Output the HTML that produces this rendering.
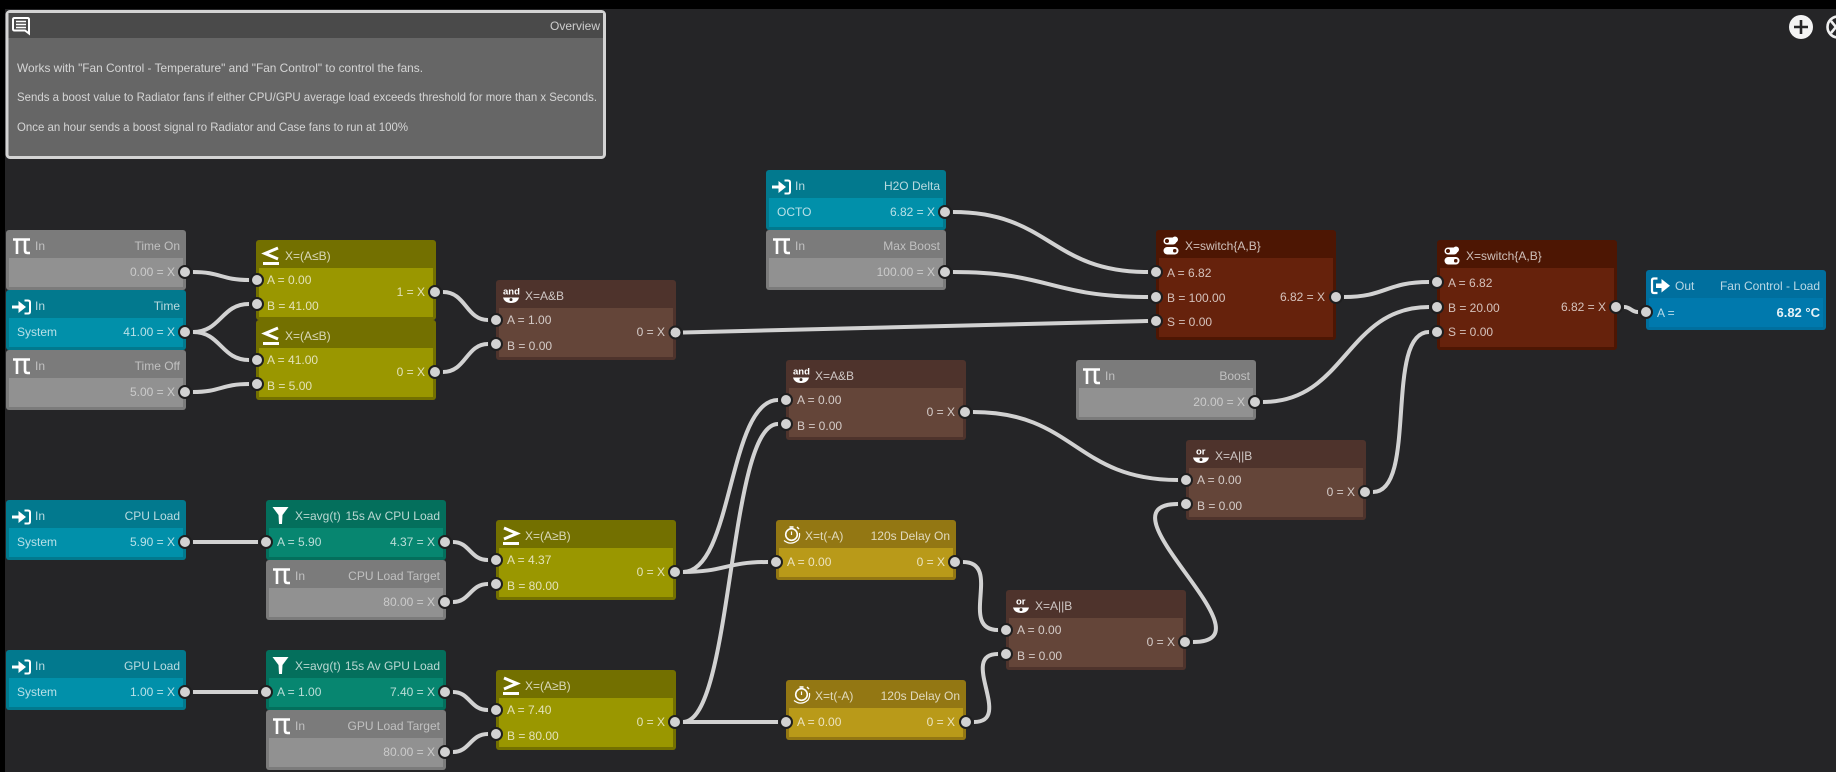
<!DOCTYPE html>
<html><head><meta charset="utf-8"><title>Flow</title>
<style>
html,body{margin:0;padding:0;background:#000;width:1836px;height:772px;overflow:hidden}
svg{display:block}
text{font-family:"Liberation Sans",sans-serif;font-size:12px;fill:#fff;fill-opacity:.72}
.gy text{fill-opacity:.52}
.e{text-anchor:end}
.w path{fill:none;stroke:#d2d2d2;stroke-width:4}
.p circle{fill:#d2d2d2;stroke:#1e1e1f;stroke-width:2}
.gy{--h:#7b7b7b;--b:#919191}
.tl{--h:#02798e;--b:#0190aa}
.ol{--h:#737000;--b:#9a9700}
.br{--h:#4e332c;--b:#644539}
.sw{--h:#4d1603;--b:#66220c}
.gr{--h:#046f5c;--b:#078670}
.ye{--h:#937713;--b:#b99a19}
.bl{--h:#006f9e;--b:#0079ad}
</style></head><body>
<svg width="1836" height="772" viewBox="0 0 1836 772" xmlns="http://www.w3.org/2000/svg">
<defs>
<rect id="n60" style="fill:var(--h)" width="180" height="60" rx="3"/>
<rect id="n60b" style="fill:var(--b)" x="3" y="28" width="174" height="29"/>
<rect id="n80" style="fill:var(--h)" width="180" height="80" rx="3"/>
<rect id="n80b" style="fill:var(--b)" x="3" y="28" width="174" height="49"/>
<rect id="n110" style="fill:var(--h)" width="180" height="110" rx="3"/>
<rect id="n110b" style="fill:var(--b)" x="3" y="28" width="174" height="79"/>
<g id="pi" fill="none" stroke="#fff" stroke-width="2.6"><path d="M7 9.5H24M11 9V24M19 9V20.5Q19 23 21.5 23H24"/></g>
<g id="in"><path d="M6 15.5H12.5V11L20 17L12.5 23V18.5H6Z" fill="#fff"/><path d="M18.5 10.5H22Q24 10.5 24 12.5V21.5Q24 23.5 22 23.5H18.5" fill="none" stroke="#fff" stroke-width="2"/></g>
<g id="out"><path d="M11.5 8.5H8Q6 8.5 6 10.5V21Q6 23 8 23H11.5" fill="none" stroke="#fff" stroke-width="2.2"/><path d="M10 13.5H15.5V9L24 15.8L15.5 22.5V18H10Z" fill="#fff"/></g>
<g id="le"><path d="M22 8L9 13.5L22 19" fill="none" stroke="#fff" stroke-width="3"/><rect x="7" y="22" width="16" height="3" fill="#fff"/></g>
<g id="ge"><path d="M8 8L21 13.5L8 19" fill="none" stroke="#fff" stroke-width="3"/><rect x="7" y="22" width="16" height="3" fill="#fff"/></g>
<g id="bowl"><path d="M7 17.5H23Q21.5 23 15 23Q8.5 23 7 17.5Z" fill="#fff"/><circle cx="15" cy="19.6" r="1.5" fill="#3a2a25"/></g>
<g id="sw"><rect x="7.5" y="7.5" width="13" height="7" rx="3.5" fill="#fff"/><circle cx="19" cy="9.5" r="3" fill="#fff"/><circle cx="11" cy="11" r="2" fill="#4d1603"/><rect x="7.5" y="17" width="15" height="7.5" rx="3.7" fill="#fff"/><rect x="17" y="19" width="3.5" height="3.5" rx="1.5" fill="#4d1603"/></g>
<path id="fn" d="M6.5 7H22.5L16.5 15L16 24H13L12.5 15Z" fill="#fff"/>
<g id="tm" fill="none" stroke="#fff"><circle cx="15.5" cy="14.5" r="5.8" stroke-width="1.6"/><path d="M13.5 7H17.5" stroke-width="1.6"/><path d="M21 7L23 9" stroke-width="1.4"/><path d="M15.5 11.5V15" stroke-width="1.2"/><path d="M8 20.5Q15 26 22 20Q24 17 23.5 13" stroke-width="1.2"/></g>
</defs>
<rect width="1836" height="772" fill="#000"/>
<rect x="5" y="9" width="1831" height="763" fill="#252527"/>

<!-- Overview -->
<rect x="7" y="11.5" width="597.5" height="146" rx="3" fill="#666" stroke="#d4d4d4" stroke-width="3"/>
<rect x="8.5" y="13" width="594.5" height="25" fill="#4a4a4a"/>
<g fill="none" stroke="#fff" stroke-width="2"><path d="M14.5 18H27.5Q29 18 29 19.5V33.5L25 30.5H14.5Q13 30.5 13 29V19.5Q13 18 14.5 18Z"/><path d="M16 21.5H26M16 24.5H26M16 27.5H26" stroke-width="1.5"/></g>
<text class="e" x="600" y="30">Overview</text>
<text x="17" y="72" textLength="406" lengthAdjust="spacingAndGlyphs">Works with "Fan Control - Temperature" and "Fan Control" to control the fans.</text>
<text x="17" y="101" textLength="580" lengthAdjust="spacingAndGlyphs">Sends a boost value to Radiator fans if either CPU/GPU average load exceeds threshold for more than x Seconds.</text>
<text x="17" y="131" textLength="391" lengthAdjust="spacingAndGlyphs">Once an hour sends a boost signal ro Radiator and Case fans to run at 100%</text>

<!-- top-right buttons -->
<circle cx="1801" cy="27" r="12" fill="#f4f4f4"/>
<path d="M1801 20V34M1794 27H1808" stroke="#252527" stroke-width="2.6"/>
<circle cx="1838" cy="27" r="10.5" fill="none" stroke="#f0f0f0" stroke-width="2.6"/>
<path d="M1831 21L1836 27L1831 33" fill="none" stroke="#f0f0f0" stroke-width="2.6"/>

<!-- nodes -->
<g class="gy" transform="translate(6,230)"><use href="#n60"/><use href="#n60b"/><use href="#pi"/><text x="29" y="20">In</text><text class="e" x="174" y="20">Time On</text><text class="e" x="169" y="46">0.00 = X</text></g>
<g class="tl" transform="translate(6,290)"><use href="#n60"/><use href="#n60b"/><use href="#in"/><text x="29" y="20">In</text><text class="e" x="174" y="20">Time</text><text x="11" y="46">System</text><text class="e" x="169" y="46">41.00 = X</text></g>
<g class="gy" transform="translate(6,350)"><use href="#n60"/><use href="#n60b"/><use href="#pi"/><text x="29" y="20">In</text><text class="e" x="174" y="20">Time Off</text><text class="e" x="169" y="46">5.00 = X</text></g>

<g class="ol" transform="translate(256,240)"><use href="#n80"/><use href="#n80b"/><use href="#le"/><text x="29" y="20">X=(A≤B)</text><text x="11" y="44">A = 0.00</text><text x="11" y="70">B = 41.00</text><text class="e" x="169" y="56">1 = X</text></g>
<g class="ol" transform="translate(256,320)"><use href="#n80"/><use href="#n80b"/><use href="#le"/><text x="29" y="20">X=(A≤B)</text><text x="11" y="44">A = 41.00</text><text x="11" y="70">B = 5.00</text><text class="e" x="169" y="56">0 = X</text></g>

<g class="br" transform="translate(496,280)"><use href="#n80"/><use href="#n80b"/><text x="7" y="14.5" style="font-size:9.5px;font-weight:bold;fill-opacity:1">and</text><use href="#bowl"/><text x="29" y="20">X=A&amp;B</text><text x="11" y="44">A = 1.00</text><text x="11" y="70">B = 0.00</text><text class="e" x="169" y="56">0 = X</text></g>
<g class="br" transform="translate(786,360)"><use href="#n80"/><use href="#n80b"/><text x="7" y="14.5" style="font-size:9.5px;font-weight:bold;fill-opacity:1">and</text><use href="#bowl"/><text x="29" y="20">X=A&amp;B</text><text x="11" y="44">A = 0.00</text><text x="11" y="70">B = 0.00</text><text class="e" x="169" y="56">0 = X</text></g>

<g class="tl" transform="translate(766,170)"><use href="#n60"/><use href="#n60b"/><use href="#in"/><text x="29" y="20">In</text><text class="e" x="174" y="20">H2O Delta</text><text x="11" y="46">OCTO</text><text class="e" x="169" y="46">6.82 = X</text></g>
<g class="gy" transform="translate(766,230)"><use href="#n60"/><use href="#n60b"/><use href="#pi"/><text x="29" y="20">In</text><text class="e" x="174" y="20">Max Boost</text><text class="e" x="169" y="46">100.00 = X</text></g>

<g class="sw" transform="translate(1156,230)"><use href="#n110"/><use href="#n110b"/><use href="#sw"/><text x="29" y="20">X=switch{A,B}</text><text x="11" y="47">A = 6.82</text><text x="11" y="72">B = 100.00</text><text x="11" y="96">S = 0.00</text><text class="e" x="169" y="71">6.82 = X</text></g>
<g class="sw" transform="translate(1437,240)"><use href="#n110"/><use href="#n110b"/><use href="#sw"/><text x="29" y="20">X=switch{A,B}</text><text x="11" y="47">A = 6.82</text><text x="11" y="72">B = 20.00</text><text x="11" y="96">S = 0.00</text><text class="e" x="169" y="71">6.82 = X</text></g>

<g class="bl" transform="translate(1646,270)"><use href="#n60"/><use href="#n60b"/><use href="#out"/><text x="29" y="20">Out</text><text class="e" x="174" y="20">Fan Control - Load</text><text x="11" y="47">A =</text><text class="e" x="174" y="47" style="font-weight:bold;fill-opacity:.9;font-size:13px">6.82 °C</text></g>

<g class="gy" transform="translate(1076,360)"><use href="#n60"/><use href="#n60b"/><use href="#pi"/><text x="29" y="20">In</text><text class="e" x="174" y="20">Boost</text><text class="e" x="169" y="46">20.00 = X</text></g>

<g class="tl" transform="translate(6,500)"><use href="#n60"/><use href="#n60b"/><use href="#in"/><text x="29" y="20">In</text><text class="e" x="174" y="20">CPU Load</text><text x="11" y="46">System</text><text class="e" x="169" y="46">5.90 = X</text></g>
<g class="tl" transform="translate(6,650)"><use href="#n60"/><use href="#n60b"/><use href="#in"/><text x="29" y="20">In</text><text class="e" x="174" y="20">GPU Load</text><text x="11" y="46">System</text><text class="e" x="169" y="46">1.00 = X</text></g>

<g class="gr" transform="translate(266,500)"><use href="#n60"/><use href="#n60b"/><use href="#fn"/><text x="29" y="20">X=avg(t)</text><text class="e" x="174" y="20">15s Av CPU Load</text><text x="11" y="46">A = 5.90</text><text class="e" x="169" y="46">4.37 = X</text></g>
<g class="gy" transform="translate(266,560)"><use href="#n60"/><use href="#n60b"/><use href="#pi"/><text x="29" y="20">In</text><text class="e" x="174" y="20">CPU Load Target</text><text class="e" x="169" y="46">80.00 = X</text></g>
<g class="gr" transform="translate(266,650)"><use href="#n60"/><use href="#n60b"/><use href="#fn"/><text x="29" y="20">X=avg(t)</text><text class="e" x="174" y="20">15s Av GPU Load</text><text x="11" y="46">A = 1.00</text><text class="e" x="169" y="46">7.40 = X</text></g>
<g class="gy" transform="translate(266,710)"><use href="#n60"/><use href="#n60b"/><use href="#pi"/><text x="29" y="20">In</text><text class="e" x="174" y="20">GPU Load Target</text><text class="e" x="169" y="46">80.00 = X</text></g>

<g class="ol" transform="translate(496,520)"><use href="#n80"/><use href="#n80b"/><use href="#ge"/><text x="29" y="20">X=(A≥B)</text><text x="11" y="44">A = 4.37</text><text x="11" y="70">B = 80.00</text><text class="e" x="169" y="56">0 = X</text></g>
<g class="ol" transform="translate(496,670)"><use href="#n80"/><use href="#n80b"/><use href="#ge"/><text x="29" y="20">X=(A≥B)</text><text x="11" y="44">A = 7.40</text><text x="11" y="70">B = 80.00</text><text class="e" x="169" y="56">0 = X</text></g>

<g class="ye" transform="translate(776,520)"><use href="#n60"/><use href="#n60b"/><use href="#tm"/><text x="29" y="20">X=t(-A)</text><text class="e" x="174" y="20">120s Delay On</text><text x="11" y="46">A = 0.00</text><text class="e" x="169" y="46">0 = X</text></g>
<g class="ye" transform="translate(786,680)"><use href="#n60"/><use href="#n60b"/><use href="#tm"/><text x="29" y="20">X=t(-A)</text><text class="e" x="174" y="20">120s Delay On</text><text x="11" y="46">A = 0.00</text><text class="e" x="169" y="46">0 = X</text></g>

<g class="br" transform="translate(1006,590)"><use href="#n80"/><use href="#n80b"/><text x="10" y="14.5" style="font-size:9.5px;font-weight:bold;fill-opacity:1">or</text><use href="#bowl"/><text x="29" y="20">X=A||B</text><text x="11" y="44">A = 0.00</text><text x="11" y="70">B = 0.00</text><text class="e" x="169" y="56">0 = X</text></g>
<g class="br" transform="translate(1186,440)"><use href="#n80"/><use href="#n80b"/><text x="10" y="14.5" style="font-size:9.5px;font-weight:bold;fill-opacity:1">or</text><use href="#bowl"/><text x="29" y="20">X=A||B</text><text x="11" y="44">A = 0.00</text><text x="11" y="70">B = 0.00</text><text class="e" x="169" y="56">0 = X</text></g>

<!-- wires -->
<g class="w">
<path d="M193 272C221 272 221 280 249 280"/>
<path d="M193 332C221 332 221 304 249 304"/>
<path d="M193 332C221 332 221 360 249 360"/>
<path d="M193 392C221 392 221 384 249 384"/>
<path d="M443 292C466 292 466 320 488 320"/>
<path d="M443 372C466 372 466 344 488 344"/>
<path d="M683 332.5L1148 321"/>
<path d="M953 212C1050 212 1050 272 1148 272"/>
<path d="M953 272C1050 272 1050 297 1148 297"/>
<path d="M1344 297C1386 297 1386 282 1429 282"/>
<path d="M1263 402C1346 402 1346 307 1429 307"/>
<path d="M1624 307C1631 307 1631 312 1638 312"/>
<path d="M1373 492C1418 492 1384 332 1429 332"/>
<path d="M1193 642C1278 642 1093 504 1178 504"/>
<path d="M683 572C733 572 728 400 778 400"/>
<path d="M683 722C733 722 728 424 778 424"/>
<path d="M683 572C725 572 725 562 768 562"/>
<path d="M683 722H778"/>
<path d="M973 412C1075 412 1075 480 1178 480"/>
<path d="M963 562C1003 562 958 630 998 630"/>
<path d="M974 722C1014 722 958 654 998 654"/>
<path d="M193 542H258"/>
<path d="M453 542C470 542 470 560 488 560"/>
<path d="M453 602C470 602 470 584 488 584"/>
<path d="M193 692H258"/>
<path d="M453 692C470 692 470 710 488 710"/>
<path d="M453 752C470 752 470 734 488 734"/>
</g>

<!-- ports -->
<g class="p">
<circle cx="185" cy="272" r="6"/><circle cx="185" cy="332" r="6"/><circle cx="185" cy="392" r="6"/>
<circle cx="257" cy="280" r="6"/><circle cx="257" cy="304" r="6"/><circle cx="435" cy="292" r="6"/>
<circle cx="257" cy="360" r="6"/><circle cx="257" cy="384" r="6"/><circle cx="435" cy="372" r="6"/>
<circle cx="496" cy="320" r="6"/><circle cx="496" cy="344" r="6"/><circle cx="675.5" cy="332.5" r="6"/>
<circle cx="945" cy="212" r="6"/><circle cx="945" cy="272" r="6"/>
<circle cx="786" cy="400" r="6"/><circle cx="786" cy="424" r="6"/><circle cx="965" cy="412" r="6"/>
<circle cx="1156" cy="272" r="6"/><circle cx="1156" cy="297" r="6"/><circle cx="1156" cy="321" r="6"/><circle cx="1336" cy="297" r="6"/>
<circle cx="1437" cy="282" r="6"/><circle cx="1437" cy="307" r="6"/><circle cx="1437" cy="332" r="6"/><circle cx="1616" cy="307" r="6"/>
<circle cx="1646" cy="312" r="6"/><circle cx="1255" cy="402" r="6"/>
<circle cx="185" cy="542" r="6"/><circle cx="266" cy="542" r="6"/><circle cx="445" cy="542" r="6"/><circle cx="445" cy="602" r="6"/>
<circle cx="496" cy="560" r="6"/><circle cx="496" cy="584" r="6"/><circle cx="675" cy="572" r="6"/>
<circle cx="185" cy="692" r="6"/><circle cx="266" cy="692" r="6"/><circle cx="445" cy="692" r="6"/><circle cx="445" cy="752" r="6"/>
<circle cx="496" cy="710" r="6"/><circle cx="496" cy="734" r="6"/><circle cx="675" cy="722" r="6"/>
<circle cx="776" cy="562" r="6"/><circle cx="955" cy="562" r="6"/>
<circle cx="786" cy="722" r="6"/><circle cx="966" cy="722" r="6"/>
<circle cx="1006" cy="630" r="6"/><circle cx="1006" cy="654" r="6"/><circle cx="1185" cy="642" r="6"/>
<circle cx="1186" cy="480" r="6"/><circle cx="1186" cy="504" r="6"/><circle cx="1365" cy="492" r="6"/>
</g>
</svg>
</body></html>
